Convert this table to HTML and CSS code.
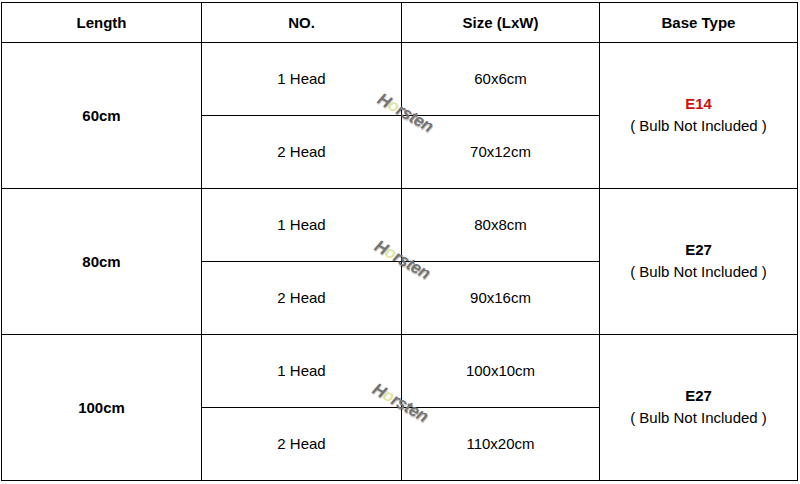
FILE: index.html
```html
<!DOCTYPE html>
<html>
<head>
<meta charset="utf-8">
<link rel="stylesheet" href="styles.css">
</head>
<body>
<div class="table">
  <div class="cell head">Length</div>
  <div class="cell head">NO.</div>
  <div class="cell head">Size (LxW)</div>
  <div class="cell head">Base Type</div>

  <div class="cell len span2">60cm</div>
  <div class="cell">1 Head</div>
  <div class="cell">60x6cm</div>
  <div class="cell base span2"><div class="stack"><span class="type red">E14</span><span>( Bulb Not Included )</span></div></div>
  <div class="cell">2 Head</div>
  <div class="cell">70x12cm</div>

  <div class="cell len span2">80cm</div>
  <div class="cell">1 Head</div>
  <div class="cell">80x8cm</div>
  <div class="cell base span2"><div class="stack"><span class="type">E27</span><span>( Bulb Not Included )</span></div></div>
  <div class="cell">2 Head</div>
  <div class="cell">90x16cm</div>

  <div class="cell len span2">100cm</div>
  <div class="cell">1 Head</div>
  <div class="cell">100x10cm</div>
  <div class="cell base span2"><div class="stack"><span class="type">E27</span><span>( Bulb Not Included )</span></div></div>
  <div class="cell">2 Head</div>
  <div class="cell">110x20cm</div>

  <div class="mark mark1">H<span class="o">o</span>rsten</div>
  <div class="mark mark2">H<span class="o">o</span>rsten</div>
  <div class="mark mark3">H<span class="o">o</span>rsten</div>
</div>
</body>
</html>
```
FILE: styles.css
```css
html, body {
  margin: 0;
  background: #fff;
}
body {
  padding: 2px 0 0 1px;
  font-family: "Liberation Sans", Arial, sans-serif;
  font-size: 15px;
  color: #000;
}
.table {
  position: relative;
  display: grid;
  grid-template-columns: 200px 200px 198px 198px;
  grid-template-rows: 40px repeat(6, 73px);
  width: max-content;
  border-top: 1px solid #000;
  border-left: 1px solid #000;
}
.cell {
  box-sizing: border-box;
  border-right: 1px solid #000;
  border-bottom: 1px solid #000;
  display: flex;
  align-items: center;
  justify-content: center;
  text-align: center;
  padding-bottom: 1px;
}
.head, .len {
  font-weight: bold;
}
.span2 {
  grid-row: span 2;
}
.stack {
  display: flex;
  flex-direction: column;
  align-items: center;
  line-height: 22px;
}
.type {
  font-weight: bold;
}
.red {
  color: #cc1111;
}
.mark {
  position: absolute;
  transform: translate(-50%, -50%) rotate(30deg);
  font-family: "Liberation Sans", Arial, sans-serif;
  font-weight: bold;
  font-style: italic;
  font-size: 17px;
  letter-spacing: -0.5px;
  color: #737373;
  text-shadow: 1px 1px 1px rgba(0, 0, 0, 0.25);
  white-space: nowrap;
  pointer-events: none;
}
.mark .o {
  color: #dfe4a8;
  text-shadow: none;
}
.mark1 { left: 403px; top: 110px; }
.mark2 { left: 400px; top: 257px; }
.mark3 { left: 398px; top: 400px; }
```
